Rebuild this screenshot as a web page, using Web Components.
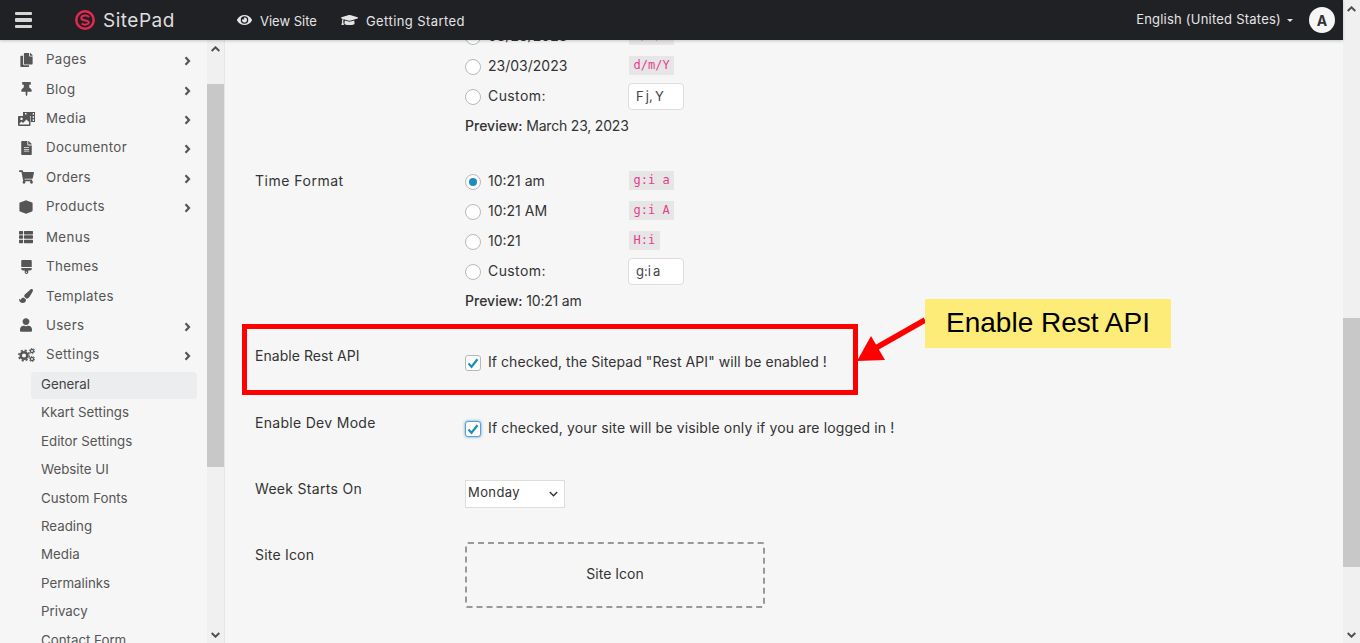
<!DOCTYPE html>
<html lang="en">

<head>
  <meta charset="UTF-8">
  <meta name="viewport" content="width=device-width, initial-scale=1.0">
  <title>SitePad - General Settings</title>
  <style>
    html, body { margin: 0; height: 643px; overflow: hidden; background: #f6f6f6; font-family: Inter, "Noto Sans", sans-serif; }
  </style>
</head>

<body>
  <script>
    const ICONS = {
      pages: `<svg viewBox="0 0 448 512" width="13" height="14"><path d="M320 448v40c0 13.255-10.745 24-24 24H24c-13.255 0-24-10.745-24-24V120c0-13.255 10.745-24 24-24h72v296c0 30.879 25.121 56 56 56h168zm0-344V0H152c-13.255 0-24 10.745-24 24v368c0 13.255 10.745 24 24 24h272c13.255 0 24-10.745 24-24V128H344c-13.2 0-24-10.8-24-24zm120.971-31.029L375.029 7.029A24 24 0 0 0 358.059 0H352v96h96v-6.059a24 24 0 0 0-7.029-16.97z"/></svg>`,
      pin: `<svg viewBox="0 0 384 512" width="11" height="14"><path d="M298.028 214.267L285.793 96H328c13.255 0 24-10.745 24-24V24c0-13.255-10.745-24-24-24H56C42.745 0 32 10.745 32 24v48c0 13.255 10.745 24 24 24h42.207L85.972 214.267C37.465 236.82 0 277.261 0 328c0 13.255 10.745 24 24 24h136v104.007c0 1.242.289 2.467.845 3.578l24 48c2.941 5.882 11.364 5.893 14.311 0l24-48a8.008 8.008 0 0 0 .845-3.578V352h136c13.255 0 24-10.745 24-24-.001-51.183-37.983-91.42-85.973-113.733z"/></svg>`,
      media: `<svg viewBox="0 0 17 14" width="17" height="14"><path d="M5 0h12v10h-4V4H5z"/><path d="M7 1h1.5v1.5H7zM14.7 1h1.3v1.8h-1.300zM14.700 4.200h1.300v1.800h-1.300zM14.700 7.200h1.300v1.800h-1.300z" fill="#f6f6f6"/><path fill-rule="evenodd" d="M1 4h10.500a1 1 0 0 1 1 1v8a1 1 0 0 1-1 1H1a1 1 0 0 1-1-1V5a1 1 0 0 1 1-1zm.5 8.500h9.500V10L8.500 7.500 5 11 3.500 9.500 1.500 11.500zM3.500 5.500a1.300 1.300 0 1 0 .01 0z"/></svg>`,
      doc: `<svg viewBox="0 0 384 512" width="11" height="14"><path d="M224 136V0H24C10.7 0 0 10.7 0 24v464c0 13.3 10.7 24 24 24h336c13.3 0 24-10.7 24-24V160H248c-13.2 0-24-10.8-24-24zm64 236c0 6.6-5.4 12-12 12H108c-6.6 0-12-5.4-12-12v-8c0-6.6 5.4-12 12-12h168c6.6 0 12 5.4 12 12v8zm0-64c0 6.6-5.4 12-12 12H108c-6.6 0-12-5.4-12-12v-8c0-6.6 5.4-12 12-12h168c6.6 0 12 5.4 12 12v8zm0-72v8c0 6.600-5.400 12-12 12H108c-6.600 0-12-5.400-12-12v-8c0-6.600 5.400-12 12-12h168c6.600 0 12 5.400 12 12zm96-114.100v6.100H256V0h6.100c6.400 0 12.500 2.500 17 7l97.900 98c4.500 4.500 7 10.600 7 16.900z"/></svg>`,
      cart: `<svg viewBox="0 0 576 512" width="15" height="14"><path d="M528.12 301.319l47.273-208C578.806 78.301 567.391 64 551.99 64H159.208l-9.166-44.81C147.758 8.021 137.93 0 126.529 0H24C10.745 0 0 10.745 0 24v16c0 13.255 10.745 24 24 24h69.883l70.248 343.435C147.325 417.1 136 435.222 136 456c0 30.928 25.072 56 56 56s56-25.072 56-56c0-15.674-6.447-29.835-16.824-40h209.647C430.447 426.165 424 440.326 424 456c0 30.928 25.072 56 56 56s56-25.072 56-56c0-22.172-12.888-41.332-31.579-50.405l5.517-24.276c3.413-15.018-8.002-29.319-23.403-29.319H218.117l-6.545-32h293.145c11.206 0 20.92-7.754 23.403-18.681z"/></svg>`,
      cube: `<svg viewBox="0 0 14 14" width="14" height="14"><path d="M7 .3l6 2.300a1 1 0 0 1 .6.900v7a1 1 0 0 1-.6.900l-6 2.400-6-2.400a1 1 0 0 1-.6-.9v-7a1 1 0 0 1 .6-.9z"/></svg>`,
      list: `<svg viewBox="0 0 512 512" width="14" height="14"><path d="M149.333 216v80c0 13.255-10.745 24-24 24H24c-13.255 0-24-10.745-24-24v-80c0-13.255 10.745-24 24-24h101.333c13.255 0 24 10.745 24 24zM0 376v80c0 13.255 10.745 24 24 24h101.333c13.255 0 24-10.745 24-24v-80c0-13.255-10.745-24-24-24H24c-13.255 0-24 10.745-24 24zM125.333 32H24C10.745 32 0 42.745 0 56v80c0 13.255 10.745 24 24 24h101.333c13.255 0 24-10.745 24-24V56c0-13.255-10.745-24-24-24zm80 448H488c13.255 0 24-10.745 24-24v-80c0-13.255-10.745-24-24-24H205.333c-13.255 0-24 10.745-24 24v80c0 13.255 10.745 24 24 24zm-24-424v80c0 13.255 10.745 24 24 24H488c13.255 0 24-10.745 24-24V56c0-13.255-10.745-24-24-24H205.333c-13.255 0-24 10.745-24 24zm24 264H488c13.255 0 24-10.745 24-24v-80c0-13.255-10.745-24-24-24H205.333c-13.255 0-24 10.745-24 24v80c0 13.255 10.745 24 24 24z"/></svg>`,
      brush: `<svg viewBox="0 0 384 512" width="11" height="14"><path d="M352 0H32C14.33 0 0 14.33 0 32v224h384V32c0-17.67-14.33-32-32-32zM0 320c0 35.35 28.66 64 64 64h64v64c0 35.35 28.66 64 64 64s64-28.65 64-64v-64h64c35.34 0 64-28.65 64-64v-32H0v32zm192 104c13.25 0 24 10.74 24 24 0 13.25-10.75 24-24 24s-24-10.75-24-24c0-13.26 10.75-24 24-24z"/></svg>`,
      paint: `<svg viewBox="0 0 512 512" width="14" height="14"><path d="M167.02 309.34c-40.12 2.58-76.53 17.86-97.19 72.3-2.35 6.21-8 9.98-14.59 9.98-11.11 0-45.46-27.67-55.25-34.35C0 439.62 37.93 512 128 512c75.86 0 128-43.77 128-120.19 0-3.11-.65-6.08-.97-9.13l-88.01-73.34zM457.89 0c-15.16 0-29.37 6.71-40.21 16.45C213.27 199.05 192 203.34 192 257.09c0 13.7 3.25 26.76 8.73 38.7l63.82 53.18c7.21 1.8 14.64 3.03 22.39 3.03 62.11 0 98.11-45.47 211.16-256.46 7.38-14.35 13.9-29.85 13.9-45.99C512 20.64 486 0 457.89 0z"/></svg>`,
      user: `<svg viewBox="0 0 448 512" width="12" height="14"><path d="M224 256c70.7 0 128-57.3 128-128S294.7 0 224 0 96 57.3 96 128s57.3 128 128 128zm89.6 32h-16.7c-22.2 10.2-46.9 16-72.9 16s-50.6-5.800-72.900-16h-16.700C60.200 288 0 348.200 0 422.400V464c0 26.500 21.500 48 48 48h352c26.500 0 48-21.500 48-48v-41.600c0-74.200-60.200-134.400-134.400-134.400z"/></svg>`,
      cogs: `<svg viewBox="0 0 17 14" width="17" height="14" fill="none" stroke="#555"><circle cx="6" cy="7.500" r="3.300" stroke-width="2.400"/><circle cx="6" cy="7.500" r="5.200" stroke-width="1.600" stroke-dasharray="2.100 2"/><circle cx="14" cy="3" r="1.600" stroke-width="1.300"/><circle cx="14" cy="3" r="2.700" stroke-width="1" stroke-dasharray="1.400 1.400"/><circle cx="14" cy="11" r="1.600" stroke-width="1.300"/><circle cx="14" cy="11" r="2.700" stroke-width="1" stroke-dasharray="1.400 1.400"/></svg>`
    };

    customElements.define("sp-topbar", class extends HTMLElement {
      constructor() {
        super().attachShadow({ mode: "open" });
        this.shadowRoot.innerHTML = `
          <style>
            :host { display: flex; align-items: center; height: 40px; background: #202124; color: #e4e4e4; font: 13px Inter, sans-serif; box-shadow: 0 1px 3px rgba(0,0,0,.2); position: relative; z-index: 2; padding-right: 8px }
            .burger { display: flex; flex-direction: column; justify-content: space-between; width: 17px; height: 16px; margin: 0 43px 0 15px }
            .burger i { height: 3.400px; background: #d6d6d6; border-radius: 1px }
            .logo { display: flex; align-items: center; gap: 8px; font-size: 19px; letter-spacing: .5px; color: #dedede; width: 162px }
            .link { display: flex; align-items: center; gap: 8px; fill: #e4e4e4; }
            .link.site { width: 104px }
            .link span { padding-top: 2px }
            .link.start span { letter-spacing: .42px }
            .right { margin-left: auto; display: flex; align-items: center }
            .lang { letter-spacing: .22px; padding-bottom: 2px }
            .caret { width: 0; height: 0; border: 3px solid transparent; border-top-color: #e4e4e4; border-bottom: 0; margin: 0 16px 0 6px }
            .avatar { width: 26px; height: 26px; border-radius: 50%; background: #f6f6f6; color: #333; font-weight: 700; font-size: 14px; display: flex; align-items: center; justify-content: center }
          </style>
          <div class="burger"><i></i><i></i><i></i></div>
          <div class="logo">
            <svg viewBox="0 0 20 20" width="20" height="20" fill="none" stroke="#e8274f"><circle cx="10" cy="10" r="8.700" stroke-width="2.500"/><path d="M14 7.200C12.500 4.800 6.500 5 6.300 8c-.2 3.200 7.800 1.800 7.500 4.500-.3 2.400-5 2.800-7 1" stroke-width="2"/></svg>
            <span>SitePad</span>
          </div>
          <div class="link site">
            <svg viewBox="0 0 576 512" width="15" height="14"><path d="M572.52 241.4C518.29 135.59 410.93 64 288 64S57.68 135.64 3.48 241.41a32.35 32.35 0 0 0 0 29.19C57.71 376.41 165.07 448 288 448s230.32-71.64 284.52-177.41a32.35 32.35 0 0 0 0-29.19zM288 400a144 144 0 1 1 144-144 143.93 143.93 0 0 1-144 144zm0-240a95.31 95.31 0 0 0-25.31 3.79 47.85 47.85 0 0 1-66.9 66.9A95.78 95.78 0 1 0 288 160z"/></svg>
            <span>View Site</span>
          </div>
          <div class="link start">
            <svg viewBox="0 0 640 512" width="17" height="14"><path d="M622.34 153.2L343.4 67.5c-15.2-4.67-31.6-4.67-46.79 0L17.66 153.2c-23.54 7.23-23.54 38.36 0 45.59l48.63 14.94c-10.67 13.19-17.23 29.28-17.88 46.9C38.78 266.15 32 276.11 32 288c0 10.78 5.68 19.85 13.86 25.65L20.33 428.53C18.11 438.52 25.71 448 35.94 448h56.11c10.24 0 17.84-9.48 15.62-19.47L82.14 313.65C90.32 307.85 96 298.78 96 288c0-11.57-6.47-21.25-15.66-26.87.76-15.02 8.44-28.3 20.69-36.72L296.6 284.5c9.06 2.78 26.44 6.25 46.79 0l278.95-85.7c23.55-7.24 23.55-38.36 0-45.6zM352.79 315.09c-28.53 8.76-52.84 3.92-65.59 0l-145.02-44.55L128 384c0 35.35 85.96 64 192 64s192-28.65 192-64l-14.18-113.47-145.03 44.56z"/></svg>
            <span>Getting Started</span>
          </div>
          <div class="right">
            <span class="lang">English (United States)</span><i class="caret"></i><div class="avatar">A</div>
          </div>`;
      }
    });

    customElements.define("sp-scrollbar", class extends HTMLElement {
      constructor() {
        super().attachShadow({ mode: "open" });
      }
      connectedCallback() {
        this.shadowRoot.innerHTML = `
          <style>
            :host { display: flex; flex-direction: column; width: 17px; background: #f0f0f0; flex: none }
            .btn { height: 17px; display: flex; align-items: center; justify-content: center; flex: none }
            .track { flex: 1 }
            .thumb { background: #c8c8c8; margin-top: ${this.getAttribute("top")}px; height: ${this.getAttribute("size")}px }
            svg { fill: none; stroke: #505050; stroke-width: 2 }
          </style>
          <div class="btn"><svg width="9" height="6" viewBox="0 0 9 6"><path d="M.7 5L4.500 1.300 8.300 5"/></svg></div>
          <div class="track"><div class="thumb"></div></div>
          <div class="btn"><svg width="9" height="6" viewBox="0 0 9 6"><path d="M.7 1L4.500 4.700 8.300 1"/></svg></div>`;
      }
    });

    customElements.define("sp-navitem", class extends HTMLElement {
      constructor() {
        super().attachShadow({ mode: "open" });
      }
      connectedCallback() {
        const arrow = this.hasAttribute("arrow")
          ? `<svg class="chev" width="7" height="10" viewBox="0 0 7 10"><path d="M1.500 1.300L5 5 1.500 8.700"/></svg>` : "";
        this.shadowRoot.innerHTML = `
          <style>
            :host { display: flex; align-items: center; height: 29.330px; padding-left: 16px; color: #555; fill: #555; font-size: 13.300px; letter-spacing: .35px }
            .ic { width: 20px; display: flex; justify-content: center; margin-right: 10px }
            .label { flex: 1; padding-bottom: 1px }
            .chev { fill: none; stroke: #555; stroke-width: 2.200; margin: 3px 16px 0 0 }
          </style>
          <span class="ic">${ICONS[this.getAttribute("icon")]}</span>
          <span class="label"><slot></slot></span>${arrow}`;
      }
    });

    customElements.define("sp-subitem", class extends HTMLElement {
      constructor() {
        super().attachShadow({ mode: "open" });
        this.shadowRoot.innerHTML = `
          <style>
            :host { display: block; height: 28.400px; padding: .7px 10px 0 31px; box-sizing: border-box; color: #555; font-size: 13.300px }
            div { height: 27px; line-height: 25px; padding-left: 10px; border-radius: 4px }
            :host([active]) div { background: #ecedef; color: #444 }
          </style>
          <div><slot></slot></div>`;
      }
    });

    customElements.define("sp-sidebar", class extends HTMLElement {
      constructor() {
        super().attachShadow({ mode: "open" });
        this.shadowRoot.innerHTML = `
          <style>
            :host { display: flex; width: 225px; box-sizing: border-box; border-right: 1px solid #e6e6e6; flex: none; height: 603px; overflow: hidden }
            nav { width: 207px; padding-top: 5.300px; box-sizing: border-box; overflow: hidden }
          </style>
          <nav><slot></slot></nav>
          <sp-scrollbar top="27" size="383"></sp-scrollbar>`;
      }
    });

    customElements.define("sp-row", class extends HTMLElement {
      constructor() {
        super().attachShadow({ mode: "open" });
      }
      connectedCallback() {
        this.shadowRoot.innerHTML = `
          <style>
            :host { display: grid; grid-template-columns: 210px 1fr; align-items: start; margin-top: ${this.getAttribute("gap") || 0}px; color: #333; font-size: 14px }
            .label { line-height: 28px; padding-top: ${this.getAttribute("nudge") || 0}px; letter-spacing: ${this.getAttribute("track") || 0}px }
            .ctl { padding-top: ${this.getAttribute("drop") || 0}px }
          </style>
          <div class="label">${this.getAttribute("label") || ""}</div>
          <div class="ctl"><slot></slot></div>`;
      }
    });

    customElements.define("sp-option", class extends HTMLElement {
      constructor() {
        super().attachShadow({ mode: "open" });
      }
      connectedCallback() {
        const fmt = this.getAttribute("format");
        const val = this.getAttribute("value");
        let extra = "";
        if (fmt) extra = `<code>${fmt}</code>`;
        if (val) extra = `<div class="input">${val}</div>`;
        this.shadowRoot.innerHTML = `
          <style>
            :host { display: grid; grid-template-columns: 23px 140px auto; align-items: center; justify-items: start; height: 30px; color: #333; font-size: 14px }
            :host([value]) { height: 30.500px }
            .radio { width: 16px; height: 16px; box-sizing: border-box; border: 1px solid #b4b9be; border-radius: 50%; background: #fff; display: flex; align-items: center; justify-content: center; margin-top: 1px }
            :host([checked]) .radio::after { content: ""; width: 8px; height: 8px; border-radius: 50%; background: #1e8cbe }
            .text { padding-bottom: 2px }
            :host([value]) .text { letter-spacing: .4px }
            code { font: 12px "DejaVu Sans Mono", monospace; color: #e83e8c; background: #e6e6e6; line-height: 19px; padding: 0 4.500px; margin-left: 1px; margin-bottom: 2px }
            .input { box-sizing: border-box; width: 56px; height: 27px; line-height: 24px; background: #fff; border: 1px solid #ddd; border-radius: 4px; padding-left: 7px; color: #444; font-size: 13px; word-spacing: -1.500px }
          </style>
          <span class="radio"></span><span class="text"><slot></slot></span>${extra}`;
      }
    });

    customElements.define("sp-preview", class extends HTMLElement {
      constructor() {
        super().attachShadow({ mode: "open" });
        this.shadowRoot.innerHTML = `
          <style>
            :host { display: block; color: #333; font-size: 14px; line-height: 27px; letter-spacing: -.2px }
            b { font-weight: 500; letter-spacing: 0 }
          </style>
          <b>Preview:</b> <slot></slot>`;
      }
    });

    customElements.define("sp-check", class extends HTMLElement {
      constructor() {
        super().attachShadow({ mode: "open" });
        this.shadowRoot.innerHTML = `
          <style>
            :host { display: flex; align-items: center; gap: 7px; height: 28px; color: #333; font-size: 14px; letter-spacing: .06px }
            :host([focused]) { letter-spacing: .14px }
            .box { width: 16px; height: 16px; box-sizing: border-box; border: 1px solid #b4b9be; border-radius: 3px; background: #fff; display: flex; align-items: center; justify-content: center; margin-top: 1px }
            :host([focused]) .box { border-color: #5b9dd9; box-shadow: 0 0 3px rgba(30,140,190,.8) }
            svg { fill: none; stroke: #1e8cbe; stroke-width: 2.200 }
            .text { padding-bottom: 2px }
          </style>
          <span class="box"><svg width="12" height="12" viewBox="0 0 12 12"><path d="M1.500 6.500L4.500 9.800 10.500 2.200"/></svg></span>
          <span class="text"><slot></slot></span>`;
      }
    });

    customElements.define("sp-select", class extends HTMLElement {
      constructor() {
        super().attachShadow({ mode: "open" });
        this.shadowRoot.innerHTML = `
          <style>
            :host { display: flex; align-items: center; justify-content: space-between; box-sizing: border-box; width: 100px; height: 28px; background: #fff; border: 1px solid #ddd; padding: 0 6px 3px 2px; color: #333; font-size: 13px; letter-spacing: .4px }
            svg { fill: none; stroke: #333; stroke-width: 1.400; margin-top: 3px }
          </style>
          <slot></slot>
          <svg width="9" height="6" viewBox="0 0 9 6"><path d="M.8 1L4.500 4.800 8.200 1"/></svg>`;
      }
    });

    customElements.define("sp-dropzone", class extends HTMLElement {
      constructor() {
        super().attachShadow({ mode: "open" });
        this.shadowRoot.innerHTML = `
          <style>
            :host { display: flex; align-items: center; justify-content: center; box-sizing: border-box; width: 300px; height: 66px; border: 2px dashed #999; border-radius: 3px; padding-bottom: 3px; color: #333; font-size: 14px }
          </style>
          <slot></slot>`;
      }
    });

    customElements.define("sp-callout", class extends HTMLElement {
      constructor() {
        super().attachShadow({ mode: "open" });
        this.shadowRoot.innerHTML = `
          <style>
            :host { position: absolute; inset: 0; pointer-events: none; z-index: 3 }
            .frame { position: absolute; left: 242px; top: 324px; width: 616px; height: 70.500px; box-sizing: border-box; border: 5px solid #fe0000 }
            .note { position: absolute; left: 925px; top: 299px; width: 246px; height: 49px; box-sizing: border-box; padding-bottom: 2px; background: #feec78; color: #000; font: 28px "Liberation Sans", Arial, sans-serif; display: flex; align-items: center; justify-content: center }
            svg { position: absolute; left: 850px; top: 310px }
          </style>
          <div class="frame"></div>
          <svg width="80" height="56" viewBox="850 310 80 56"><path d="M925 320L874 349" stroke="#fe0000" stroke-width="5.500" fill="none"/><path d="M857 361L871 336 885 360z" fill="#fe0000"/></svg>
          <div class="note">Enable Rest API</div>`;
      }
    });

    customElements.define("sp-app", class extends HTMLElement {
      constructor() {
        super().attachShadow({ mode: "open" });
        this.shadowRoot.innerHTML = `
          <style>
            :host { display: flex; position: relative; width: 1360px; height: 643px; overflow: hidden; background: #f6f6f6; font-family: Inter, "Noto Sans", sans-serif }
            .left { flex: 1; display: flex; flex-direction: column; min-width: 0 }
            .body { flex: 1; display: flex; min-height: 0 }
            main { flex: 1; overflow: hidden; padding-left: 30px }
            .content { margin-top: -18.300px }
          </style>
          <div class="left">
            <sp-topbar></sp-topbar>
            <div class="body">
              <slot name="side"></slot>
              <main><div class="content"><slot></slot></div></main>
            </div>
          </div>
          <sp-scrollbar top="301" size="249"></sp-scrollbar>
          <sp-callout></sp-callout>`;
      }
    });
  </script>

  <sp-app>
    <sp-sidebar slot="side">
      <sp-navitem icon="pages" arrow>Pages</sp-navitem>
      <sp-navitem icon="pin" arrow>Blog</sp-navitem>
      <sp-navitem icon="media" arrow>Media</sp-navitem>
      <sp-navitem icon="doc" arrow>Documentor</sp-navitem>
      <sp-navitem icon="cart" arrow>Orders</sp-navitem>
      <sp-navitem icon="cube" arrow style="margin-bottom:1.5px">Products</sp-navitem>
      <sp-navitem icon="list">Menus</sp-navitem>
      <sp-navitem icon="brush">Themes</sp-navitem>
      <sp-navitem icon="paint">Templates</sp-navitem>
      <sp-navitem icon="user" arrow>Users</sp-navitem>
      <sp-navitem icon="cogs" arrow>Settings</sp-navitem>
      <sp-subitem active style="margin-top:2px">General</sp-subitem>
      <sp-subitem>Kkart Settings</sp-subitem>
      <sp-subitem>Editor Settings</sp-subitem>
      <sp-subitem>Website UI</sp-subitem>
      <sp-subitem>Custom Fonts</sp-subitem>
      <sp-subitem>Reading</sp-subitem>
      <sp-subitem>Media</sp-subitem>
      <sp-subitem>Permalinks</sp-subitem>
      <sp-subitem>Privacy</sp-subitem>
      <sp-subitem>Contact Form</sp-subitem>
    </sp-sidebar>

    <sp-row>
      <div>
        <sp-option format="m/d/Y">03/23/2023</sp-option>
        <sp-option format="d/m/Y">23/03/2023</sp-option>
        <sp-option value="F j, Y">Custom:</sp-option>
        <sp-preview>March 23, 2023</sp-preview>
      </div>
    </sp-row>
    <sp-row label="Time Format" gap="27" nudge="1" track=".5">
      <div>
        <sp-option checked format="g:i a">10:21 am</sp-option>
        <sp-option format="g:i A">10:21 AM</sp-option>
        <sp-option format="H:i">10:21</sp-option>
        <sp-option value="g:i a">Custom:</sp-option>
        <sp-preview>10:21 am</sp-preview>
      </div>
    </sp-row>
    <sp-row label="Enable Rest API" gap="28" drop="7" track=".05">
      <sp-check>If checked, the Sitepad "Rest API" will be enabled !</sp-check>
    </sp-row>
    <sp-row label="Enable Dev Mode" gap="32" drop="5.5" track=".3">
      <sp-check focused>If checked, your site will be visible only if you are logged in !</sp-check>
    </sp-row>
    <sp-row label="Week Starts On" gap="32.5" drop="5" track=".3">
      <sp-select>Monday</sp-select>
    </sp-row>
    <sp-row label="Site Icon" gap="33" drop="1" track=".2">
      <sp-dropzone>Site Icon</sp-dropzone>
    </sp-row>
  </sp-app>
</body>

</html>
